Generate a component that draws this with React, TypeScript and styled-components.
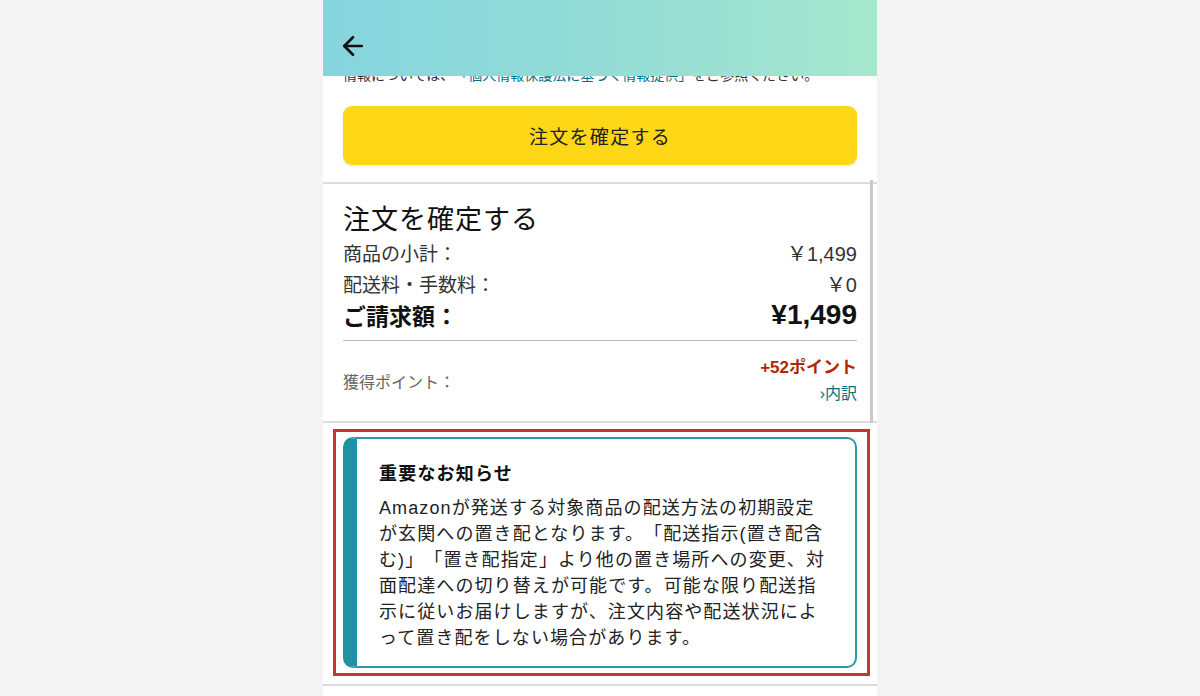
import React from "react";
import styled, { createGlobalStyle } from "styled-components";
import { ArrowLeft } from "lucide-react";

const Global = createGlobalStyle`
  html, body { margin: 0; padding: 0; background: #f4f4f4; }
  body {
    font-family: "Liberation Sans", "Noto Sans CJK JP", sans-serif;
    color: #111;
    text-spacing-trim: space-all;
  }
  * { box-sizing: border-box; }
`;

const Page = styled.div`
  width: 554px;
  height: 696px;
  margin: 0 auto;
  background: #fff;
  position: relative;
  overflow: hidden;
`;

const Header = styled.header`
  position: absolute;
  top: 0;
  left: 0;
  right: 0;
  height: 76px;
  background: linear-gradient(90deg, #85d5df 0%, #93dcd6 50%, #a6e6cd 100%);
  display: flex;
  align-items: flex-end;
  padding: 0 0 15px 15px;
  z-index: 2;
`;

const BackButton = styled.button`
  border: 0;
  background: none;
  padding: 0;
  display: flex;
  color: #111;
`;

const Content = styled.main`
  display: flex;
  flex-direction: column;
  padding-top: 65px;
`;

const Note = styled.p`
  margin: 0;
  padding: 0 20px;
  font-size: 14px;
  line-height: 20px;
  color: #333;
  white-space: nowrap;
`;

const NoteLink = styled.span`
  color: #007185;
`;

const ButtonWrap = styled.div`
  padding: 21px 20px 17px;
`;

const PlaceOrder = styled.button`
  width: 100%;
  height: 59px;
  border: 0;
  border-radius: 9px;
  background: #fed716;
  box-shadow: 0 1px 3px rgba(200, 160, 0, 0.25);
  font-family: "Noto Sans CJK JP", sans-serif;
  font-size: 19px;
  letter-spacing: 1.3px;
  color: #222;
`;

const Divider = styled.div`
  height: 2px;
  background: #dcdcdc;
`;

const Summary = styled.section`
  position: relative;
  padding: 16px 20px 0;
  display: flex;
  flex-direction: column;
`;

const ScrollBar = styled.div`
  position: absolute;
  right: 4px;
  top: -4px;
  bottom: -2px;
  width: 3px;
  background: #c9c9c9;
`;

const Title = styled.h2`
  margin: 0 0 1px;
  font-family: "Noto Sans CJK JP", sans-serif;
  font-weight: 400;
  font-size: 27px;
  letter-spacing: 1px;
  line-height: 36px;
  color: #111;
`;

const Row = styled.div<{ $strong?: boolean }>`
  display: flex;
  justify-content: space-between;
  align-items: center;
  height: 31px;
  font-size: ${(p) => (p.$strong ? "23px" : "19px")};
  font-weight: ${(p) => (p.$strong ? 700 : 400)};
  color: ${(p) => (p.$strong ? "#111" : "#333")};
`;

const Amount = styled.span<{ $strong?: boolean }>`
  font-size: ${(p) => (p.$strong ? "28px" : "20px")};
  color: ${(p) => (p.$strong ? "#111" : "#333")};
`;

const Rule = styled.hr`
  margin: 10px 0 0;
  border: 0;
  border-top: 1px solid #bdbdbd;
`;

const PointsRow = styled.div`
  display: flex;
  justify-content: space-between;
  align-items: center;
  padding: 16px 0 16px;
`;

const PointsLabel = styled.span`
  font-size: 16px;
  color: #666;
`;

const PointsRight = styled.div`
  display: flex;
  flex-direction: column;
  align-items: flex-end;
  gap: 4px;
`;

const PointsValue = styled.span`
  font-size: 17px;
  line-height: 22px;
  font-weight: 700;
  color: #b12704;
`;

const Breakdown = styled.span`
  font-size: 16px;
  line-height: 22px;
  color: #007185;
`;

const NoticeSection = styled.section`
  padding: 6px 7px 0 10px;
`;

const Highlight = styled.div`
  border: 3px solid #bf3a2c;
  padding: 5px 10px 5px 7px;
`;

const Card = styled.div`
  border: 2px solid #2a9aa8;
  border-left: 14px solid #1f93a2;
  border-radius: 10px;
  padding: 20px 14px 15px 22px;
  display: flex;
  flex-direction: column;
  gap: 10px;
`;

const CardTitle = styled.h3`
  margin: 0;
  font-family: "Noto Sans CJK JP", sans-serif;
  font-size: 18px;
  font-weight: 700;
  letter-spacing: 1.2px;
  line-height: 26px;
  color: #111;
`;

const CardBody = styled.p`
  margin: 0;
  font-size: 18px;
  letter-spacing: 1.1px;
  line-height: 26px;
  color: #222;
  white-space: nowrap;
`;

const BottomDivider = styled.div`
  margin-top: 8px;
  height: 2px;
  background: #dcdcdc;
`;

const bodyLines = [
  "Amazonが発送する対象商品の配送方法の初期設定",
  "が玄関への置き配となります。「配送指示(置き配含",
  "む)」「置き配指定」より他の置き場所への変更、対",
  "面配達への切り替えが可能です。可能な限り配送指",
  "示に従いお届けしますが、注文内容や配送状況によ",
  "って置き配をしない場合があります。",
];

export default function App() {
  return (
    <>
      <Global />
      <Page>
        <Header>
          <BackButton aria-label="戻る">
            <ArrowLeft size={30} strokeWidth={2.1} />
          </BackButton>
        </Header>
        <Content>
          <Note>
            情報については、<NoteLink>「個人情報保護法に基づく情報提供」</NoteLink>をご参照ください。
          </Note>
          <ButtonWrap>
            <PlaceOrder>注文を確定する</PlaceOrder>
          </ButtonWrap>
          <Divider />
          <Summary>
            <ScrollBar />
            <Title>注文を確定する</Title>
            <Row>
              <span>商品の小計：</span>
              <Amount>￥1,499</Amount>
            </Row>
            <Row>
              <span>配送料・手数料：</span>
              <Amount>￥0</Amount>
            </Row>
            <Row $strong>
              <span>ご請求額：</span>
              <Amount $strong>¥1,499</Amount>
            </Row>
            <Rule />
            <PointsRow>
              <PointsLabel>獲得ポイント：</PointsLabel>
              <PointsRight>
                <PointsValue>+52ポイント</PointsValue>
                <Breakdown>›内訳</Breakdown>
              </PointsRight>
            </PointsRow>
          </Summary>
          <Divider />
          <NoticeSection>
            <Highlight>
              <Card>
                <CardTitle>重要なお知らせ</CardTitle>
                <CardBody>
                  {bodyLines.map((l, i) => (
                    <React.Fragment key={i}>
                      {l}
                      {i < bodyLines.length - 1 && <br />}
                    </React.Fragment>
                  ))}
                </CardBody>
              </Card>
            </Highlight>
          </NoticeSection>
          <BottomDivider />
        </Content>
      </Page>
    </>
  );
}
